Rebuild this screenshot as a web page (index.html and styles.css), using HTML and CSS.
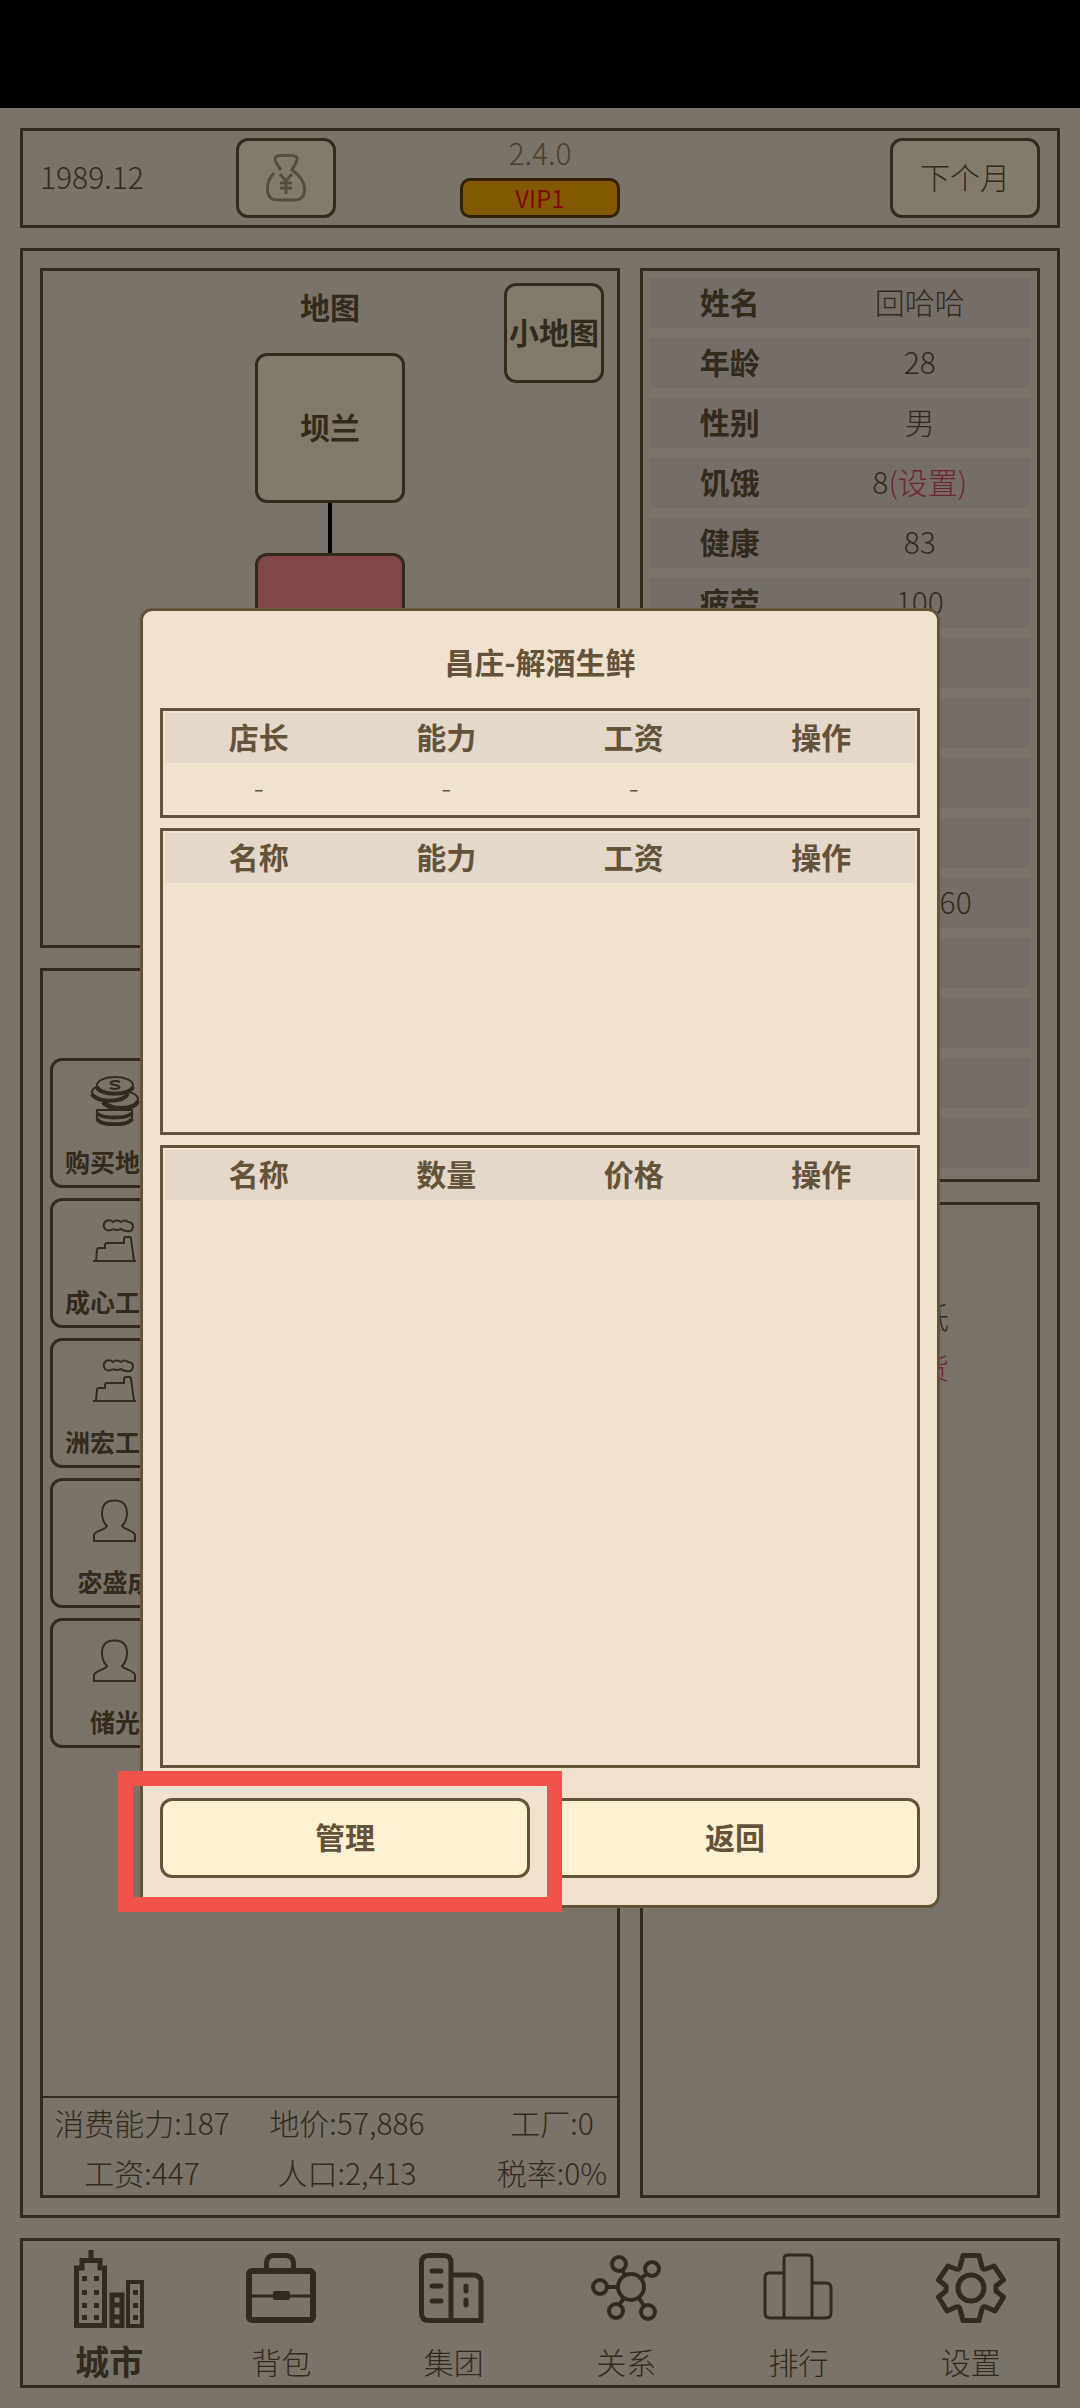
FILE: index.html
```html
<!DOCTYPE html>
<html lang="zh-CN">
<head>
    <meta charset="utf-8" />
    <meta name="viewport" content="width=device-width">
    <title>昌庄</title>
    <link rel="stylesheet" href="styles.css">
</head>

<body>
    <div class="statusbar"></div>

    <div class="app">
        <header class="topbar">
            <div class="date">1989.12</div>
            <button class="btn money" aria-label="资金">
                <svg width="40" height="48" viewBox="0 0 40 48">
                    <path d="M8 19C3 24 1 30 1.500 37C2 43 6 46 12 46H28C34 46 38 43 38.500 37C39 29 35 22 26 16C28 12 31 8 31 5C31 2 28 1.500 25 1.500H15C12 1.500 9 2 9 5C9 8 12 12 15 16" />
                    <path d="M14 20L20 27L26 20M20 27V40M14 29H26M14 34H26" />
                </svg>
            </button>
            <div class="version">
                <span>2.4.0</span>
                <button class="vip">VIP1</button>
            </div>
            <button class="btn next">下个月</button>
        </header>

        <main class="main">
            <div class="col">
                <section class="box map">
                    <h2>地图</h2>
                    <button class="btn minimap">小地图</button>
                    <button class="btn node">坝兰</button>
                    <div class="road"></div>
                    <button class="btn node current" aria-label="昌庄"></button>
                </section>

                <section class="box city">
                    <div class="places">
                        <button class="place">
                            <svg width="50" height="50" viewBox="0 0 50 50">
                                <path class="fill" d="M7 34V43C10 51 38 51 42 43V34Z" />
                                <path class="thick" d="M7 43C11 50 38 50 42 43M7 37C11 43 38 43 42 37" />
                                <ellipse class="fill" cx="31" cy="23" rx="17" ry="8" />
                                <path class="thick" d="M13 26C17 34 44 36 48 25" />
                                <ellipse class="fill" cx="20" cy="16" rx="18" ry="8" />
                                <path class="thick" d="M2 18C6 27 33 27 38 18" />
                                <ellipse class="fill" cx="25" cy="9" rx="18" ry="8" />
                                <path class="thick" d="M7 11C10 20 39 20 43 11" />
                                <path d="M30 6Q25 4 21 6Q19 8 25 9Q31 10 29 12Q25 14 20 12" />
                            </svg>
                            <span>购买地皮</span>
                        </button>
                        <button class="place">
                            <svg width="50" height="50" viewBox="-3 -3 50 50">
                                <path d="M0 42H43M3 42L4 31Q4 29 6 29H12V26Q12 24 14 24H31V20Q31 18 33 18H36Q38 18 38 20L41 42" />
                                <path d="M20 10Q16 13 12 10Q9 6 13 2Q17 0 20 3Q24 0 28 3Q32 0 35 3Q40 3 40 8Q39 13 34 12Q30 12 28 10Q24 12 20 10" />
                            </svg>
                            <span>成心工厂</span>
                        </button>
                        <button class="place">
                            <svg width="50" height="50" viewBox="-3 -3 50 50">
                                <path d="M0 42H43M3 42L4 31Q4 29 6 29H12V26Q12 24 14 24H31V20Q31 18 33 18H36Q38 18 38 20L41 42" />
                                <path d="M20 10Q16 13 12 10Q9 6 13 2Q17 0 20 3Q24 0 28 3Q32 0 35 3Q40 3 40 8Q39 13 34 12Q30 12 28 10Q24 12 20 10" />
                            </svg>
                            <span>洲宏工厂</span>
                        </button>
                        <button class="place">
                            <svg width="50" height="50" viewBox="-3 -3 50 50">
                                <path d="M14 27C8 21 8 11 11 6C15 0 28 0 32 6C35 11 35 21 29 27C30 30 42 32 42 36V42H1V36C1 32 14 30 14 27Z" />
                            </svg>
                            <span>宓盛成</span>
                        </button>
                        <button class="place">
                            <svg width="50" height="50" viewBox="-3 -3 50 50">
                                <path d="M14 27C8 21 8 11 11 6C15 0 28 0 32 6C35 11 35 21 29 27C30 30 42 32 42 36V42H1V36C1 32 14 30 14 27Z" />
                            </svg>
                            <span>储光</span>
                        </button>
                    </div>
                    <div class="stats">
                        <span>消费能力:187</span>
                        <span>地价:57,886</span>
                        <span>工厂:0</span>
                        <span>工资:447</span>
                        <span>人口:2,413</span>
                        <span>税率:0%</span>
                    </div>
                </section>
            </div>

            <div class="col">
                <section class="box person">
                    <table class="info">
                        <tr><th>姓名</th><td>回哈哈</td></tr>
                        <tr><th>年龄</th><td>28</td></tr>
                        <tr><th>性别</th><td>男</td></tr>
                        <tr><th>饥饿</th><td>8<a href="#">(设置)</a></td></tr>
                        <tr><th>健康</th><td>83</td></tr>
                        <tr><th>疲劳</th><td>100</td></tr>
                        <tr><th></th><td></td></tr>
                        <tr><th></th><td></td></tr>
                        <tr><th></th><td></td></tr>
                        <tr><th></th><td></td></tr>
                        <tr><th></th><td>102,860</td></tr>
                        <tr><th></th><td></td></tr>
                        <tr><th></th><td></td></tr>
                        <tr><th></th><td></td></tr>
                        <tr><th></th><td></td></tr>
                    </table>
                </section>
                <section class="box news">
                    <p>低</p>
                    <p class="pink">货</p>
                </section>
            </div>
        </main>

        <nav class="tabs">
            <a href="#" class="active">
                <svg width="70" height="80" viewBox="0 0 70 80">
                    <path d="M17 2V12" stroke-width="5" />
                    <path d="M2.500 77.500V20H8V12.500H26V20H30.500V77.500Z" stroke-width="5" />
                    <path d="M8 28h5v5h-5zM20 28h5v5h-5zM8 42h5v5h-5zM20 42h5v5h-5zM8 55h5v5h-5zM20 55h5v5h-5zM8 67h5v5h-5zM20 67h5v5h-5zM59 42h5v5h-5zM59 55h5v5h-5zM59 67h5v5h-5z" class="solid" />
                    <path d="M38 78V47H48V78ZM38 57H48M38 69H48" stroke-width="5" />
                    <path d="M54 78V34H68V78Z" stroke-width="4" />
                </svg>
                <span>城市</span>
            </a>
            <a href="#">
                <svg width="70" height="80" viewBox="0 -5 70 80">
                    <rect x="3" y="18" width="64" height="49" rx="3" stroke-width="6" />
                    <path d="M20.500 17V10Q21 2.500 28 2.500H40Q47 3 47.500 10V17" stroke-width="5" />
                    <path d="M5 43H65" stroke-width="3" />
                    <rect x="27" y="38" width="17" height="9" rx="2" class="solid" />
                </svg>
                <span>背包</span>
            </a>
            <a href="#">
                <svg width="70" height="80" viewBox="0 -5 70 80">
                    <path d="M32 67.500V10Q32 2.500 25 2.500H10Q2.500 2.500 2.500 10V60Q2.500 67.500 10 67.500H62V28Q61 22 54 22H33" stroke-width="5" />
                    <path d="M13 18H22M13 33H22M13 48H22M47 33V38M47 47V52" stroke-width="5" stroke-linecap="round" />
                </svg>
                <span>集团</span>
            </a>
            <a href="#">
                <svg width="70" height="80" viewBox="0 -5 70 80">
                    <g stroke-width="4">
                        <circle cx="40" cy="34" r="13" />
                        <circle cx="28" cy="11" r="7" />
                        <circle cx="61" cy="16" r="7" />
                        <circle cx="9" cy="34" r="7" />
                        <circle cx="25" cy="58" r="7" />
                        <circle cx="57" cy="59" r="7" />
                        <path d="M31 17L34 22M56 21L50 25M16 34H27M28 52L33 45M53 53L48 45" />
                    </g>
                </svg>
                <span>关系</span>
            </a>
            <a href="#">
                <svg width="70" height="80" viewBox="0 -5 70 80">
                    <g stroke-width="3">
                        <path d="M21 20H6Q2 20 2 25V60Q2 65 7 65H63Q68 65 68 60V35Q68 30 63 30H49" />
                        <path d="M21 66V6Q21 2 25 2H45Q49 2 49 6V66" />
                    </g>
                </svg>
                <span>排行</span>
            </a>
            <a href="#">
                <svg width="70" height="80" viewBox="0 -5 70 80">
                    <g stroke-width="5" stroke-linejoin="round">
                        <path d="M27 2.500H43L46 14Q47 17 50 16L58 13L67.500 27L60 33V38L67.500 44L59 58L50 54Q47 53 46 56L43 67.500H27L24 56Q23 53 20 54L11 58L2.500 44L10 38V33L2.500 27L12 13L20 16Q23 17 24 14Z" />
                        <circle cx="35" cy="35" r="13" />
                    </g>
                </svg>
                <span>设置</span>
            </a>
        </nav>
    </div>

    <!-- 店铺弹窗 -->
    <div class="mask">
        <div class="dialog" role="dialog" aria-labelledby="shopTitle">
            <h1 id="shopTitle">昌庄-解酒生鲜</h1>

            <div class="list manager">
                <table>
                    <tr><th>店长</th><th>能力</th><th>工资</th><th>操作</th></tr>
                    <tr><td>-</td><td>-</td><td>-</td><td></td></tr>
                </table>
            </div>
            <div class="list staff">
                <table>
                    <tr><th>名称</th><th>能力</th><th>工资</th><th>操作</th></tr>
                </table>
            </div>
            <div class="list goods">
                <table>
                    <tr><th>名称</th><th>数量</th><th>价格</th><th>操作</th></tr>
                </table>
            </div>

            <div class="actions">
                <div class="marked"><button class="btn">管理</button></div>
                <button class="btn">返回</button>
            </div>
        </div>
    </div>
</body>
</html>
```
FILE: styles.css
```css
* {
    box-sizing: border-box;
}

body {
    margin: 0;
    min-height: 100vh;
    display: flex;
    flex-direction: column;
    background: #efe2cf;
    color: #63533a;
    font-family: "Noto Sans CJK SC", sans-serif;
    font-size: 30px;
    font-weight: 300;
    line-height: 46px;
}

h1, h2, p {
    margin: 0;
    padding-bottom: 4px;
    font-size: 30px;
}

button {
    font: inherit;
    color: inherit;
    padding: 0;
}

a {
    color: inherit;
    text-decoration: none;
}

table {
    width: 100%;
    border-collapse: separate;
    border-spacing: 0;
    table-layout: fixed;
}

th, td {
    padding: 0 0 4px;
    text-align: center;
}

svg {
    display: block;
    fill: none;
    stroke: #63533a;
}

.solid {
    fill: #63533a;
    stroke: none;
}

.statusbar {
    height: 108px;
    background: #000;
}

.app {
    flex: 1;
    display: flex;
    flex-direction: column;
    gap: 20px;
    padding: 20px;
}

.topbar, .main, .tabs, .box, .list {
    border: 3px solid #63533a;
}

.btn {
    padding-bottom: 4px;
    border: 3px solid #63533a;
    border-radius: 12px;
    background: #fff2d3;
    font-weight: bold;
}

/* 顶栏 */
.topbar {
    height: 100px;
    display: grid;
    grid-template-columns: 196px 100px 1fr 150px;
    align-items: center;
    padding: 0 17px;
    position: relative;
}

.date {
    padding-bottom: 4px;
}

.money {
    height: 80px;
    display: flex;
    align-items: center;
    justify-content: center;
    padding: 0;
}

.money svg {
    stroke: #a59678;
    stroke-width: 3;
}

/* 版本号在整条顶栏正中 */
.version {
    position: absolute;
    top: 7px;
    left: calc(50% - 80px);
    width: 160px;
    display: flex;
    flex-direction: column;
    gap: 12px;
    text-align: center;
    line-height: 28px;
    color: #8f7d5f;
}

.vip {
    height: 40px;
    border: 3px solid #63430a;
    border-radius: 10px;
    background: #ffae00;
    color: #ff1010;
    font-size: 24px;
    font-weight: normal;
}

.next {
    grid-column: 4;
    height: 80px;
    font-weight: 300;
}

/* 主区域 */
.main {
    flex: 1;
    display: grid;
    grid-template-columns: 29fr 20fr;
    gap: 20px;
    padding: 17px;
}

.col {
    display: flex;
    flex-direction: column;
    gap: 20px;
}

.map {
    height: 680px;
    position: relative;
    display: flex;
    flex-direction: column;
    align-items: center;
    padding-top: 12px;
}

.map h2 {
    margin-bottom: 20px;
}

.minimap {
    position: absolute;
    top: 12px;
    right: 13px;
    width: 100px;
    height: 100px;
    white-space: nowrap;
}

.node {
    width: 150px;
    height: 150px;
}

.current {
    background: #ff8d90;
}

.road {
    width: 4px;
    height: 50px;
    background: #000;
}

.city {
    flex: 1;
    display: flex;
    flex-direction: column;
}

.places {
    flex: 1;
    display: grid;
    grid-template-columns: 130px;
    grid-auto-rows: 130px;
    gap: 10px;
    padding: 87px 7px 0;
}

.place {
    display: flex;
    flex-direction: column;
    align-items: center;
    gap: 20px;
    padding-top: 15px;
    border: 3px solid #63533a;
    border-radius: 12px;
    background: none;
    font-size: 25px;
    font-weight: bold;
    line-height: 30px;
}

.place svg {
    stroke-width: 2;
}

.place .fill {
    fill: #efe2cf;
}

.place .thick {
    stroke-width: 4;
}

.stats {
    display: grid;
    grid-template-columns: 198px 212px 1fr;
    row-gap: 4px;
    padding-top: 1px;
    border-top: 2px solid #63533a;
    text-align: center;
    white-space: nowrap;
}

.stats span:nth-child(3n) {
    padding-left: 34px;
}

.person {
    height: 914px;
    padding: 2px 7px;
}

.info th, .info td {
    height: 60px;
    border-top: 5px solid #f1e3d6;
    border-bottom: 5px solid #f1e3d6;
    background: #e6d7cc;
}

.info th {
    width: 42%;
}

.info a {
    color: #d34a62;
}

.news {
    flex: 1;
    padding: 88px 88px 0;
    text-align: right;
}

.pink {
    color: #d8407a;
}

/* 底部导航 */
.tabs {
    height: 150px;
    display: grid;
    grid-template-columns: repeat(6, 1fr);
}

.tabs a {
    display: flex;
    flex-direction: column;
    align-items: center;
    gap: 10px;
    padding-top: 7px;
}

.tabs .active {
    font-size: 34px;
    font-weight: bold;
}

/* 弹窗 */
.mask {
    position: fixed;
    top: 108px;
    right: 0;
    bottom: 0;
    left: 0;
    display: flex;
    align-items: center;
    padding: 0 140px;
    background: rgba(0, 0, 0, .49);
}

.dialog {
    flex: 1;
    display: flex;
    flex-direction: column;
    gap: 10px;
    padding: 27px 17px;
    border: 3px solid #63533a;
    border-radius: 12px;
    background: #efe2cf;
}

.dialog h1 {
    margin-bottom: 10px;
    text-align: center;
}

.list {
    padding: 2px;
}

.list th {
    background: #e4d8cb;
}

.manager {
    height: 110px;
}

.staff {
    height: 307px;
}

.goods {
    height: 623px;
}

.actions {
    display: grid;
    grid-template-columns: 1fr 1fr;
    gap: 20px;
    margin-top: 20px;
}

.actions .btn {
    width: 100%;
    height: 80px;
}

.marked {
    position: relative;
}

.marked::after {
    content: "";
    position: absolute;
    top: -27px;
    right: -32px;
    bottom: -34px;
    left: -42px;
    border: 15px solid #f1524a;
    pointer-events: none;
}
```
